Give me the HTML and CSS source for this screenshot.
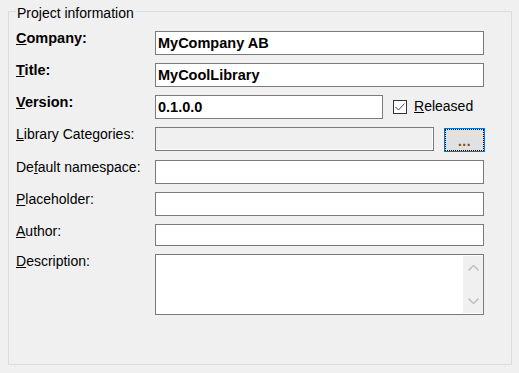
FILE: index.html
```html
<!DOCTYPE html>
<html lang="en">

<head>
    <meta charset="UTF-8">
    <meta name="viewport" content="width=device-width, initial-scale=1.0">
    <title>Project information</title>

    <link rel="stylesheet" href="styles.css">
</head>

<body>
    <fieldset class="group">
        <legend>Project information</legend>

        <div class="row">
            <label class="lbl bold"><u>C</u>ompany:</label>
            <input class="field bold" type="text" value="MyCompany AB">
        </div>
        <div class="row">
            <label class="lbl bold"><u>T</u>itle:</label>
            <input class="field bold" type="text" value="MyCoolLibrary">
        </div>
        <div class="row">
            <label class="lbl bold"><u>V</u>ersion:</label>
            <input class="field bold short" type="text" value="0.1.0.0">
            <span class="check">
                <svg width="12" height="12" viewBox="0 0 12 12">
                    <polyline points="1.5,6 4.5,9 10.5,2.5" fill="none" stroke="#444" stroke-width="1" />
                </svg>
            </span>
            <span class="check-text"><u>R</u>eleased</span>
        </div>
        <div class="row row-cat">
            <label class="lbl"><u>L</u>ibrary Categories:</label>
            <input class="field disabled" type="text" disabled>
            <button class="dots">...</button>
        </div>
        <div class="row">
            <label class="lbl">De<u>f</u>ault namespace:</label>
            <input class="field" type="text">
        </div>
        <div class="row">
            <label class="lbl"><u>P</u>laceholder:</label>
            <input class="field" type="text">
        </div>
        <div class="row row-author">
            <label class="lbl"><u>A</u>uthor:</label>
            <input class="field" type="text">
        </div>
        <div class="row row-desc">
            <label class="lbl"><u>D</u>escription:</label>
            <div class="memo">
                <textarea></textarea>
                <div class="scroll">
                    <svg width="11" height="6" viewBox="0 0 11 6">
                        <polyline points="0.5,5.5 5.5,0.5 10.5,5.5" fill="none" stroke="#c2c2c2" stroke-width="1.6" />
                    </svg>
                    <svg width="11" height="6" viewBox="0 0 11 6">
                        <polyline points="0.5,0.5 5.5,5.5 10.5,0.5" fill="none" stroke="#c2c2c2" stroke-width="1.6" />
                    </svg>
                </div>
            </div>
        </div>
    </fieldset>
</body>

</html>
```

FILE: styles.css
```css
* {
    margin: 0;
    padding: 0;
    box-sizing: border-box;
}

body {
    background: #f0f0f0;
    font-family: "Liberation Sans", Arial, sans-serif;
    font-size: 14px;
    color: #000;
}

.group {
    margin: 2px 8px 0 8px;
    height: 363px;
    border: 1px solid #dcdcdc;
    padding: 10px 26px 0 7px;
}

.group legend {
    padding: 3px 1px 0;
    line-height: 16px;
}

.row {
    display: flex;
    align-items: flex-start;
    height: 24px;
    margin-bottom: 8px;
}

.lbl {
    width: 139px;
    flex-shrink: 0;
    line-height: 12px;
    padding-top: 1px;
}

.bold {
    font-weight: bold;
    font-size: 14.5px;
}

.field {
    width: 329px;
    height: 24px;
    border: 1px solid #7a7a7a;
    background: #fff;
    padding: 0 2px;
    font-family: "Liberation Sans", Arial, sans-serif;
    outline: none;
}

.field.short {
    width: 228px;
}

.check {
    width: 14px;
    height: 14px;
    margin: 5px 7px 0 10px;
    border: 1px solid #333;
    background: #fff;
    display: flex;
    align-items: center;
    justify-content: center;
}

.check-text {
    line-height: 16px;
    padding-top: 3px;
}

.row-cat {
    margin-bottom: 9px;
}

.field.disabled {
    width: 279px;
    background: #f0f0f0;
    box-shadow: inset -1px -1px 0 #fff;
}

.dots {
    width: 41px;
    height: 24px;
    margin: 1px 0 0 10px;
    border: 1px solid #0078d7;
    outline: 1px dotted #000;
    outline-offset: -2px;
    background: #e1e1e1;
    color: #8a4c00;
    font-family: "Liberation Sans", Arial, sans-serif;
    font-size: 14px;
    font-weight: bold;
    letter-spacing: 0.5px;
    line-height: 16px;
    padding-top: 1px;
}

.row-author {
    height: 22px;
}

.row-author .field {
    height: 22px;
}

.row-desc {
    height: 61px;
}

.memo {
    width: 329px;
    height: 61px;
    border: 1px solid #7a7a7a;
    background: #fff;
    display: flex;
    padding: 1px 0 1px 0;
}

.memo textarea {
    flex: 1;
    border: none;
    outline: none;
    resize: none;
    background: #fff;
}

.scroll {
    width: 20px;
    background: #f0f0f0;
    display: flex;
    flex-direction: column;
    align-items: center;
    justify-content: space-between;
    padding: 9px 0 9px;
}
```
